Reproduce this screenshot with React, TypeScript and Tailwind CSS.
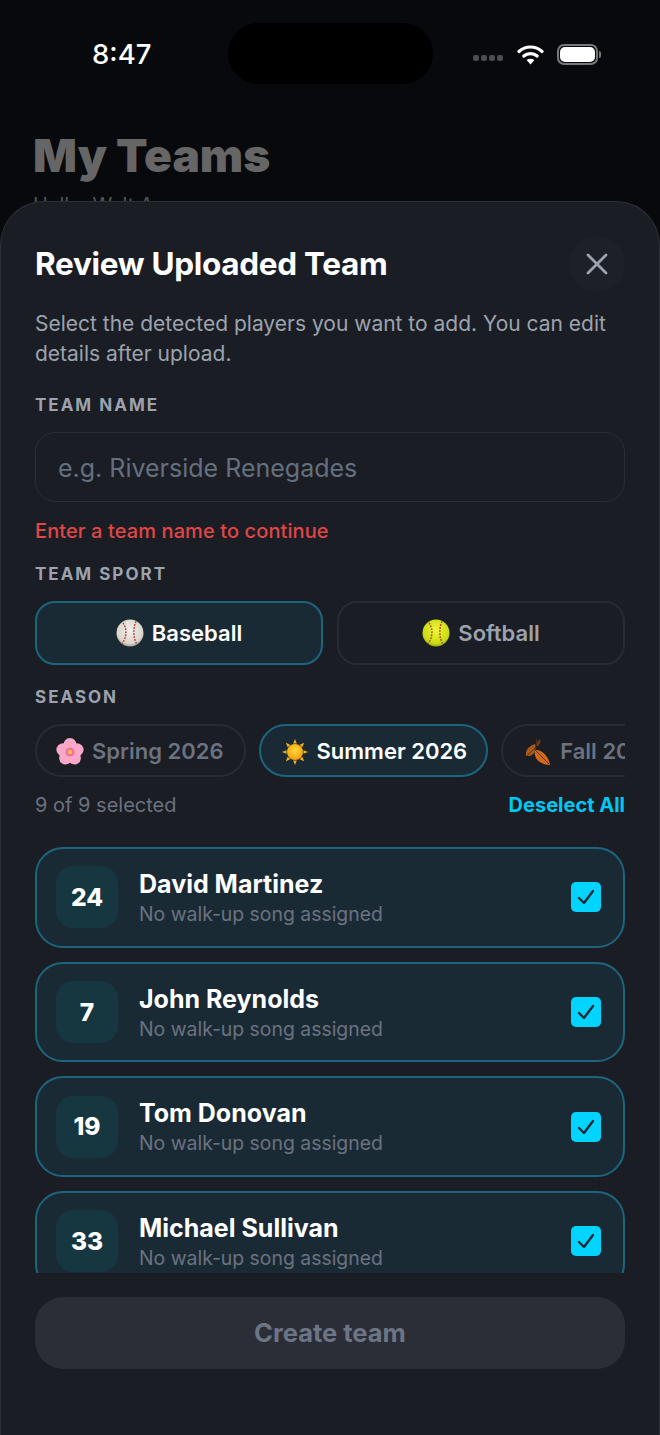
import React from "react";

const Baseball = () => (
  <svg width="28" height="28" viewBox="0 0 28 28" className="shrink-0">
    <defs>
      <radialGradient id="bb" cx="0.5" cy="0.4" r="0.65">
        <stop offset="0" stopColor="#f4f1ec" />
        <stop offset="0.75" stopColor="#d9d4cc" />
        <stop offset="1" stopColor="#8f8a84" />
      </radialGradient>
    </defs>
    <circle cx="14" cy="14" r="13.500" fill="url(#bb)" />
    <path d="M7 4 C11 9 11 19 6 24.500" fill="none" stroke="#b8322f" strokeWidth="1.5" strokeDasharray="1.6 1.4" />
    <path d="M20 2.5 C17 9 17 19 21 25.500" fill="none" stroke="#b8322f" strokeWidth="1.5" strokeDasharray="1.6 1.4" />
  </svg>
);

const Softball = () => (
  <svg width="28" height="28" viewBox="0 0 28 28" className="shrink-0">
    <defs>
      <radialGradient id="sb" cx="0.5" cy="0.4" r="0.65">
        <stop offset="0" stopColor="#f0f43a" />
        <stop offset="0.75" stopColor="#c9dc12" />
        <stop offset="1" stopColor="#7f9410" />
      </radialGradient>
    </defs>
    <circle cx="14" cy="14" r="13.500" fill="url(#sb)" />
    <path d="M7 4 C11 9 11 19 6 24.500" fill="none" stroke="#b23a26" strokeWidth="1.5" strokeDasharray="1.6 1.4" />
    <path d="M20 2.5 C17 9 17 19 21 25.500" fill="none" stroke="#b23a26" strokeWidth="1.5" strokeDasharray="1.6 1.4" />
  </svg>
);

const Blossom = () => (
  <svg width="28" height="28" viewBox="0 0 28 28" className="shrink-0">
    {[0, 72, 144, 216, 288].map((a) => (
      <ellipse key={a} cx="14" cy="7.200" rx="6.600" ry="7.200" fill="#f9a8c9" transform={`rotate(${a} 14 14)`} />
    ))}
    <circle cx="14" cy="14" r="4.500" fill="#f26f9f" />
    <circle cx="14" cy="14" r="2.200" fill="#f5c33c" />
  </svg>
);

const Sun = () => (
  <svg width="28" height="28" viewBox="0 0 28 28" className="shrink-0">
    <defs>
      <radialGradient id="sun" cx="0.5" cy="0.4" r="0.6">
        <stop offset="0" stopColor="#ffd93b" />
        <stop offset="1" stopColor="#f59e0b" />
      </radialGradient>
    </defs>
    {[0, 45, 90, 135, 180, 225, 270, 315].map((a) => (
      <path key={a} d="M14 1 L15.800 5.500 L12.200 5.500 Z" fill="#f5b01e" transform={`rotate(${a} 14 14)`} />
    ))}
    <circle cx="14" cy="14" r="8" fill="url(#sun)" />
  </svg>
);

const Leaf = () => (
  <svg width="28" height="28" viewBox="0 0 28 28" className="shrink-0">
    <path d="M11 12 C17 11 25 18 26 27 C18 27 9 22 11 12 Z" fill="#d2691a" />
    <path d="M2 18 C1 12 5 8 11 6 C13 11 11 16 6 18 Z" fill="#a8591c" />
    <path d="M13 1 L11 12 L25 26 M11 10 L3 18" stroke="#5e2f0d" strokeWidth="1" fill="none" />
    <path d="M16 1 C17 4 16 7 13 9 C12 6 13 3 16 1 Z" fill="#6f3b12" />
  </svg>
);

const Wifi = () => (
  <svg width="27" height="21" viewBox="0 0 27 21" className="shrink-0">
    <path d="M2 7.500 C8.500 1.500 18.500 1.500 25 7.500" fill="none" stroke="#fff" strokeWidth="3.200" strokeLinecap="round" />
    <path d="M6.800 12 C10.500 8.700 16.500 8.700 20.200 12" fill="none" stroke="#fff" strokeWidth="3.200" strokeLinecap="round" />
    <path d="M13.500 20.500 L9.600 16 C11.800 14.300 15.200 14.300 17.400 16 Z" fill="#fff" />
  </svg>
);

const players = [
  ["24", "David Martinez"],
  ["7", "John Reynolds"],
  ["19", "Tom Donovan"],
  ["33", "Michael Sullivan"],
];

const labelCls = "text-[17px] leading-[20px] font-bold tracking-[2px] text-[#9ca3af]";

export default function App() {
  return (
    <div className="relative h-[1435px] w-[660px] overflow-hidden bg-[#07090d] font-['Inter',sans-serif]">
      <div className="relative flex h-[84px] items-center pl-[92px] pr-[59px] pt-[24px]">
        <span className="text-[27.500px] leading-[32px] font-medium text-white">8:47</span>
        <div className="absolute left-[228px] top-[23px] h-[61px] w-[205px] rounded-[31px] bg-black" />
        <div className="ml-auto flex items-center">
          <div className="mr-[14px] mt-[8px] flex gap-[2px]">
            <span className="h-[6px] w-[6px] rounded-[2px] bg-[#4b4d52]" />
            <span className="h-[6px] w-[6px] rounded-[2px] bg-[#4b4d52]" />
            <span className="h-[6px] w-[6px] rounded-[2px] bg-[#4b4d52]" />
            <span className="h-[6px] w-[6px] rounded-[2px] bg-[#4b4d52]" />
          </div>
          <Wifi />
          <div className="ml-[13px] flex h-[21px] w-[41px] items-center justify-center rounded-[7px] border-2 border-[#77787c]">
            <span className="h-[15px] w-[35px] rounded-[5px] bg-white" />
          </div>
          <span className="ml-[1px] h-[7px] w-[2px] rounded-r-[2px] bg-[#77787c]" />
        </div>
      </div>
      <div className="pl-[33px] pt-[43px]">
        <div className="text-[46px] leading-[56px] font-black tracking-[0px] text-[#666666]">My Teams</div>
        <div className="mt-[10px] text-[20px] leading-[24px] text-[#555555]">Hello, Walt A.</div>
      </div>

      <div className="absolute inset-x-0 bottom-0 top-[201px] flex flex-col rounded-t-[44px] border-x border-t border-[#2d3038] bg-[#1a1d24] px-[34px] pt-[34px]">
        <div className="flex h-[56px] items-center justify-between">
          <h1 className="text-[31.500px] leading-[36px] font-bold tracking-[-0.3px] text-white">Review Uploaded Team</h1>
          <div className="flex h-[56px] w-[56px] items-center justify-center rounded-full bg-[#1e2028]">
            <svg width="22" height="22" viewBox="0 0 22 22">
              <path d="M2 2 L20 20 M20 2 L2 20" stroke="#9ca3af" strokeWidth="2.800" strokeLinecap="round" />
            </svg>
          </div>
        </div>
        <p className="mt-[17px] text-[21px] leading-[30px] text-[#9ca3af]">
          Select the detected players you want to add. You can edit details after upload.
        </p>
        <div className={`mt-[26px] ${labelCls}`}>TEAM NAME</div>
        <div className="mt-[17px] flex h-[70px] items-center rounded-[20px] border border-[#2a2d35] bg-[#1a1d24] px-[22px] pt-[3px] text-[25px] text-[#64707f]">
          e.g. Riverside Renegades
        </div>
        <div className="mt-[17px] text-[20px] leading-[24px] font-medium tracking-[0.1px] text-[#e04646]">Enter a team name to continue</div>
        <div className={`mt-[21px] ${labelCls}`}>TEAM SPORT</div>
        <div className="mt-[17px] flex gap-[14px]">
          <div className="flex h-[64px] flex-1 items-center justify-center gap-[8px] rounded-[20px] border-2 border-[#1c657d] bg-[#1a2a35] text-[22px] font-semibold text-white">
            <Baseball />
            Baseball
          </div>
          <div className="flex h-[64px] flex-1 items-center justify-center gap-[8px] rounded-[20px] border-2 border-[#282b33] text-[22px] font-semibold text-[#9ca3af]">
            <Softball />
            Softball
          </div>
        </div>
        <div className={`mt-[22px] ${labelCls}`}>SEASON</div>
        <div className="mt-[17px] flex gap-[13px] overflow-hidden">
          <div className="flex h-[53px] shrink-0 items-center gap-[8px] rounded-full border-2 border-[#282b33] pl-[19px] pr-[20px] pt-[2px] text-[22px] font-semibold text-[#6b7280]">
            <Blossom />
            Spring 2026
          </div>
          <div className="flex h-[53px] shrink-0 items-center gap-[8px] rounded-full border-2 border-[#1c657d] bg-[#1a2a35] pl-[20px] pr-[19px] pt-[2px] text-[22px] font-semibold text-white">
            <Sun />
            Summer 2026
          </div>
          <div className="flex h-[53px] shrink-0 items-center gap-[8px] rounded-full border-2 border-[#282b33] pl-[21px] pr-[20px] pt-[2px] text-[22px] font-semibold text-[#6b7280]">
            <Leaf />
            Fall 2026
          </div>
        </div>
        <div className="mt-[16px] flex items-center justify-between text-[20px] leading-[24px]">
          <span className="text-[#6b7280]">9 of 9 selected</span>
          <span className="font-bold text-[#00c8f0]">Deselect All</span>
        </div>
        <div className="mt-[30px] flex h-[426px] flex-col gap-[14px] overflow-hidden">
          {players.map(([num, name]) => (
            <div
              key={name}
              className="flex h-[100.700px] shrink-0 items-center rounded-[28px] border-2 border-[#1c657d] bg-[#1a2a35] pl-[19px] pr-[22px]"
            >
              <div className="flex h-[62px] w-[62px] shrink-0 items-center justify-center rounded-[17px] bg-[#163640] text-[24.500px] font-extrabold text-white">
                {num}
              </div>
              <div className="ml-[21px] mt-[2px] flex-1">
                <div className="text-[25px] leading-[30px] font-bold text-white">{name}</div>
                <div className="mt-[1px] text-[19.400px] leading-[28px] text-[#6b7280]">No walk-up song assigned</div>
              </div>
              <div className="flex h-[30px] w-[30px] items-center justify-center rounded-[5px] bg-[#00d4ff]">
                <svg width="20" height="20" viewBox="0 0 20 20">
                  <path d="M3 11 L8 16 L17 4" fill="none" stroke="#1b2a35" strokeWidth="2.400" strokeLinecap="round" strokeLinejoin="round" />
                </svg>
              </div>
            </div>
          ))}
        </div>
        <div className="mt-[24px] flex h-[72px] items-center justify-center rounded-[28px] bg-[#2c2e37] text-[25.500px] font-bold text-[#6b7585]">
          Create team
        </div>
      </div>
    </div>
  );
}
